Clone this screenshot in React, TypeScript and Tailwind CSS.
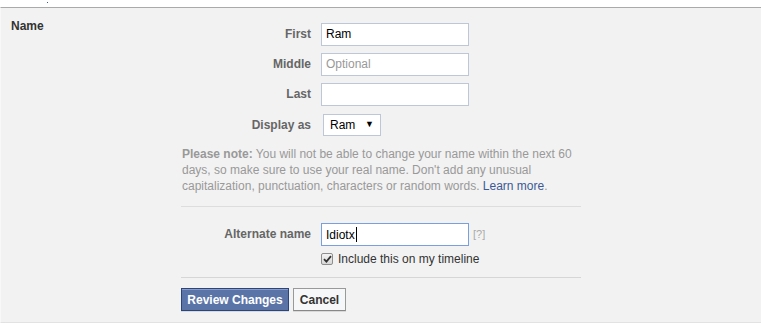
import React from "react";

const labelCls = "w-[140px] pr-[10px] text-right font-bold text-[#666] leading-[23px]";
const inputCls =
  "w-[148px] h-[23px] border border-[#bdc7d8] bg-white px-[4px] text-[12px] leading-[21px] text-black";

function Row({ label, children }: { label: string; children: React.ReactNode }) {
  return (
    <div className="flex items-center">
      <div className={labelCls}>{label}</div>
      {children}
    </div>
  );
}

export default function App() {
  return (
    <div className="w-[761px] h-[325px] bg-white font-['Liberation_Sans',Arial,sans-serif] text-[12px]">
      <div className="h-[7px] relative">
        <span className="absolute left-[47px] top-[2px] w-px h-px bg-[#3b5998]" />
      </div>
      <div className="flex h-[316px] border-t border-t-[#aaaaaa] border-b border-b-[#e2e2e2] border-l border-l-[#f8f8f8] bg-[#f2f2f2]">
        <div className="w-[180px] pl-[10px] pt-[11px] font-bold text-[#333] leading-[15px]">Name</div>

        <div className="w-[400px] pt-[15px]">
          <div className="flex flex-col gap-[7px]">
            <Row label="First">
              <div className={inputCls}>Ram</div>
            </Row>
            <Row label="Middle">
              <div className={inputCls + " !text-[#999]"}>Optional</div>
            </Row>
            <Row label="Last">
              <div className={inputCls} />
            </Row>
          </div>

          <div className="mt-[8px] flex items-center">
            <div className={labelCls + " !leading-[22px]"}>Display as</div>
            <div className="ml-[2px] flex h-[22px] w-[58px] items-center justify-between border border-[#bdc7d8] bg-white pl-[6px] pr-[6px] text-black">
              <span className="text-[12px]">Ram</span>
              <span className="text-[9px]">▼</span>
            </div>
          </div>

          <p className="mt-[10px] pl-px leading-[16px] text-[#999]">
            <b>Please note:</b> You will not be able to change your name within the next 60 days, so make sure to use
            your real name. Don't add any unusual capitalization, punctuation, characters or random words.{" "}
            <a className="text-[#3b5998]">Learn more</a>.
          </p>

          <div className="mt-[12px] border-t border-[#dddddd]" />

          <div className="mt-[16px] flex items-center">
            <div className={labelCls}>Alternate name</div>
            <div className="flex h-[23px] w-[148px] items-center border border-[#7b9ee0] bg-white px-[4px] text-black">
              <span>Idiotx</span>
              <span className="ml-px h-[15px] w-px bg-black" />
            </div>
            <span className="ml-[4px] text-[11px] text-[#aaa]">[?]</span>
          </div>

          <div className="mt-[5px] flex items-center pl-[140px] leading-[16px]">
            <span className="flex h-[12px] w-[12px] items-center justify-center rounded-[2px] border border-[#8e8e8e] bg-[linear-gradient(#f4f4f4,#d8d8d8)]">
              <svg width="9" height="8" viewBox="0 0 9 8">
                <path d="M1 4.2 L3.4 6.6 L8 1.2" fill="none" stroke="#333" strokeWidth="1.8" />
              </svg>
            </span>
            <span className="ml-[5px] text-[#333]">Include this on my timeline</span>
          </div>

          <div className="mt-[10px] border-t border-[#d6d6d6]" />

          <div className="mt-[10px] flex gap-[4px]">
            <button className="h-[23px] w-[108px] border border-[#29447e] bg-[#5b74a8] font-bold text-white shadow-[inset_0_1px_0_#8a9cc2,0_1px_0_rgba(0,0,0,0.1)]">
              Review Changes
            </button>
            <button className="h-[23px] w-[53px] border border-[#999] border-b-[#888] bg-[#f6f7f8] font-bold text-[#333] shadow-[0_1px_0_rgba(0,0,0,0.1)]">
              Cancel
            </button>
          </div>
        </div>
      </div>
    </div>
  );
}
